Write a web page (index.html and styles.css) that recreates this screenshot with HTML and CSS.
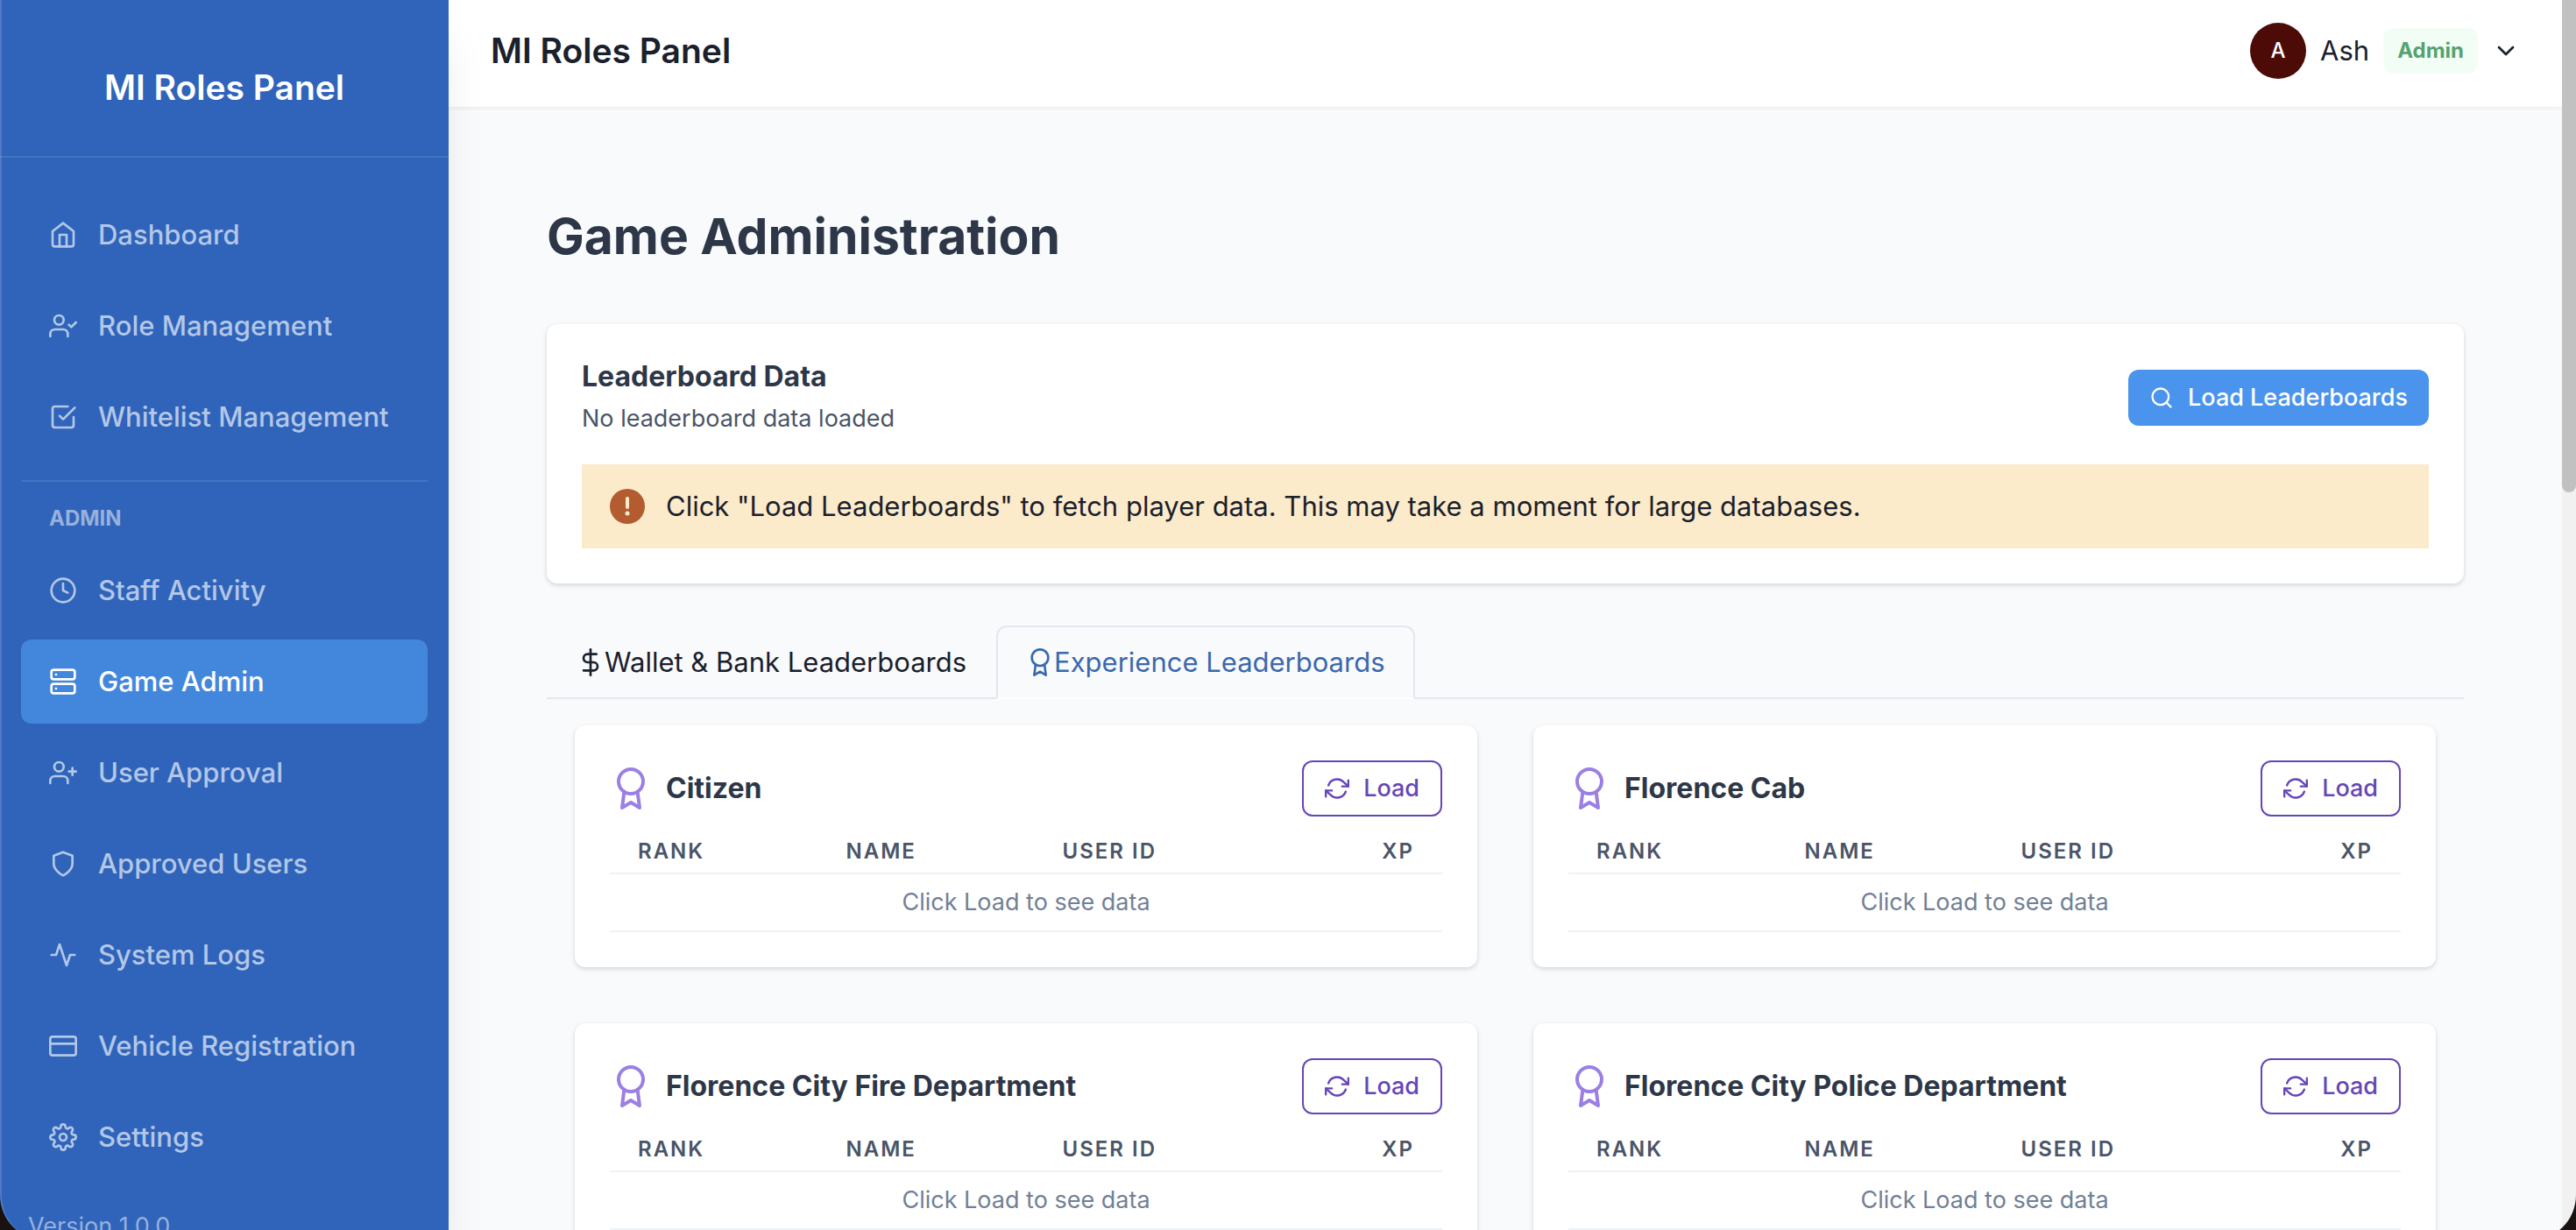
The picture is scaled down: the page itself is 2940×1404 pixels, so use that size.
FILE: index.html
```html
<!DOCTYPE html>
<html lang="en">
<head>
<meta charset="utf-8">
<title>MI Roles Panel</title>
<link rel="stylesheet" href="styles.css">
</head>
<body>
<svg class="sprite" aria-hidden="true">
  <symbol id="home" viewBox="0 0 24 24"><path d="M3 9l9-7 9 7v11a2 2 0 0 1-2 2H5a2 2 0 0 1-2-2z"/><path d="M9 22V12h6v10"/></symbol>
  <symbol id="user-check" viewBox="0 0 24 24"><path d="M16 21v-2a4 4 0 0 0-4-4H5a4 4 0 0 0-4 4v2"/><circle cx="8.500" cy="7" r="4"/><path d="M17 11l2 2 4-4"/></symbol>
  <symbol id="check-square" viewBox="0 0 24 24"><path d="M9 11l3 3L22 4"/><path d="M21 12v7a2 2 0 0 1-2 2H5a2 2 0 0 1-2-2V5a2 2 0 0 1 2-2h11"/></symbol>
  <symbol id="clock" viewBox="0 0 24 24"><circle cx="12" cy="12" r="10"/><path d="M12 6v6l4 2"/></symbol>
  <symbol id="server" viewBox="0 0 24 24"><rect x="2" y="2" width="20" height="8" rx="2"/><rect x="2" y="14" width="20" height="8" rx="2"/><path d="M6 6h.01M6 18h.01"/></symbol>
  <symbol id="user-plus" viewBox="0 0 24 24"><path d="M16 21v-2a4 4 0 0 0-4-4H5a4 4 0 0 0-4 4v2"/><circle cx="8.500" cy="7" r="4"/><path d="M20 8v6M23 11h-6"/></symbol>
  <symbol id="shield" viewBox="0 0 24 24"><path d="M12 22s8-4 8-10V5l-8-3-8 3v7c0 6 8 10 8 10z"/></symbol>
  <symbol id="activity" viewBox="0 0 24 24"><path d="M22 12h-4l-3 9L9 3l-3 9H2"/></symbol>
  <symbol id="card" viewBox="0 0 24 24"><rect x="1" y="4" width="22" height="16" rx="2"/><path d="M1 10h22"/></symbol>
  <symbol id="settings" viewBox="0 0 24 24"><circle cx="12" cy="12" r="3"/><path d="M19.4 15a1.65 1.65 0 0 0 .33 1.82l.06.06a2 2 0 0 1 0 2.83 2 2 0 0 1-2.83 0l-.06-.06a1.65 1.65 0 0 0-1.82-.33 1.65 1.65 0 0 0-1 1.51V21a2 2 0 0 1-2 2 2 2 0 0 1-2-2v-.09A1.65 1.65 0 0 0 9 19.4a1.65 1.65 0 0 0-1.82.33l-.06.06a2 2 0 0 1-2.83 0 2 2 0 0 1 0-2.83l.06-.06a1.65 1.65 0 0 0 .33-1.82 1.65 1.65 0 0 0-1.51-1H3a2 2 0 0 1-2-2 2 2 0 0 1 2-2h.09A1.65 1.65 0 0 0 4.6 9a1.65 1.65 0 0 0-.33-1.82l-.06-.06a2 2 0 0 1 0-2.83 2 2 0 0 1 2.83 0l.06.06a1.65 1.65 0 0 0 1.82.33H9a1.65 1.65 0 0 0 1-1.51V3a2 2 0 0 1 2-2 2 2 0 0 1 2 2v.09a1.65 1.65 0 0 0 1 1.51 1.65 1.65 0 0 0 1.82-.33l.06-.06a2 2 0 0 1 2.83 0 2 2 0 0 1 0 2.83l-.06.06a1.65 1.65 0 0 0-.33 1.82V9a1.65 1.65 0 0 0 1.51 1H21a2 2 0 0 1 2 2 2 2 0 0 1-2 2h-.09a1.65 1.65 0 0 0-1.51 1z"/></symbol>
  <symbol id="chevron-down" viewBox="0 0 24 24"><path d="M6 9l6 6 6-6"/></symbol>
  <symbol id="search" viewBox="0 0 24 24"><circle cx="11" cy="11" r="8"/><path d="M21 21l-4.350-4.350"/></symbol>
  <symbol id="dollar" viewBox="0 0 24 24"><path d="M12 1v22"/><path d="M17 5H9.500a3.500 3.500 0 0 0 0 7h5a3.500 3.500 0 0 1 0 7H6"/></symbol>
  <symbol id="award" viewBox="0 0 24 24"><circle cx="12" cy="8" r="7"/><path d="M8.210 13.890L7 23l5-3 5 3-1.210-9.120"/></symbol>
  <symbol id="refresh" viewBox="0 0 24 24"><path d="M23 4v6h-6M1 20v-6h6"/><path d="M3.510 9a9 9 0 0 1 14.850-3.360L23 10M1 14l4.640 4.360A9 9 0 0 0 20.490 15"/></symbol>
</svg>

<div class="app">
  <aside class="sidebar">
    <div class="brand">MI Roles Panel</div>
    <nav class="nav">
      <a class="nav-item" href="#"><svg class="icon"><use href="#home"/></svg>Dashboard</a>
      <a class="nav-item" href="#"><svg class="icon"><use href="#user-check"/></svg>Role Management</a>
      <a class="nav-item" href="#"><svg class="icon"><use href="#check-square"/></svg>Whitelist Management</a>
      <div class="nav-label">ADMIN</div>
      <a class="nav-item" href="#"><svg class="icon"><use href="#clock"/></svg>Staff Activity</a>
      <a class="nav-item active" href="#" aria-current="page"><svg class="icon"><use href="#server"/></svg>Game Admin</a>
      <a class="nav-item" href="#"><svg class="icon"><use href="#user-plus"/></svg>User Approval</a>
      <a class="nav-item" href="#"><svg class="icon"><use href="#shield"/></svg>Approved Users</a>
      <a class="nav-item" href="#"><svg class="icon"><use href="#activity"/></svg>System Logs</a>
      <a class="nav-item" href="#"><svg class="icon"><use href="#card"/></svg>Vehicle Registration</a>
      <a class="nav-item" href="#"><svg class="icon"><use href="#settings"/></svg>Settings</a>
    </nav>
    <div class="version">Version 1.0.0</div>
  </aside>

  <div class="page">
    <header class="topbar">
      <div class="topbar-title">MI Roles Panel</div>
      <button class="user-menu" type="button">
        <span class="avatar">A</span>
        <span>Ash</span>
        <span class="badge">Admin</span>
        <svg class="icon"><use href="#chevron-down"/></svg>
      </button>
    </header>

    <main class="content">
      <h1>Game Administration</h1>

      <section class="card summary">
        <div class="summary-row">
          <div>
            <h2>Leaderboard Data</h2>
            <p class="status">No leaderboard data loaded</p>
          </div>
          <button class="btn btn-primary" type="button"><svg class="icon"><use href="#search"/></svg>Load Leaderboards</button>
        </div>
        <div class="alert" role="alert">
          <svg class="alert-icon" viewBox="0 0 40 40"><circle class="alert-disc" cx="20" cy="20" r="20"/><path class="alert-mark" d="M20 11v10"/><circle class="alert-dot" cx="20" cy="28" r="2.500"/></svg>
          Click "Load Leaderboards" to fetch player data. This may take a moment for large databases.
        </div>
      </section>

      <div class="tabs" role="tablist">
        <button class="tab" type="button" role="tab" aria-selected="false"><svg class="icon"><use href="#dollar"/></svg>Wallet &amp; Bank Leaderboards</button>
        <button class="tab active" type="button" role="tab" aria-selected="true"><svg class="icon"><use href="#award"/></svg>Experience Leaderboards</button>
      </div>

      <div class="boards" role="tabpanel">
        <section class="card">
          <div class="board-head">
            <svg class="icon board-icon"><use href="#award"/></svg>
            <h2>Citizen</h2>
            <button class="btn btn-outline" type="button"><svg class="icon"><use href="#refresh"/></svg>Load</button>
          </div>
          <table>
            <colgroup><col class="col-rank"><col class="col-name"><col><col></colgroup>
            <thead><tr><th>RANK</th><th>NAME</th><th>USER ID</th><th class="num">XP</th></tr></thead>
            <tbody><tr><td colspan="4">Click Load to see data</td></tr></tbody>
          </table>
        </section>
        <section class="card">
          <div class="board-head">
            <svg class="icon board-icon"><use href="#award"/></svg>
            <h2>Florence Cab</h2>
            <button class="btn btn-outline" type="button"><svg class="icon"><use href="#refresh"/></svg>Load</button>
          </div>
          <table>
            <colgroup><col class="col-rank"><col class="col-name"><col><col></colgroup>
            <thead><tr><th>RANK</th><th>NAME</th><th>USER ID</th><th class="num">XP</th></tr></thead>
            <tbody><tr><td colspan="4">Click Load to see data</td></tr></tbody>
          </table>
        </section>
        <section class="card">
          <div class="board-head">
            <svg class="icon board-icon"><use href="#award"/></svg>
            <h2>Florence City Fire Department</h2>
            <button class="btn btn-outline" type="button"><svg class="icon"><use href="#refresh"/></svg>Load</button>
          </div>
          <table>
            <colgroup><col class="col-rank"><col class="col-name"><col><col></colgroup>
            <thead><tr><th>RANK</th><th>NAME</th><th>USER ID</th><th class="num">XP</th></tr></thead>
            <tbody><tr><td colspan="4">Click Load to see data</td></tr></tbody>
          </table>
        </section>
        <section class="card">
          <div class="board-head">
            <svg class="icon board-icon"><use href="#award"/></svg>
            <h2>Florence City Police Department</h2>
            <button class="btn btn-outline" type="button"><svg class="icon"><use href="#refresh"/></svg>Load</button>
          </div>
          <table>
            <colgroup><col class="col-rank"><col class="col-name"><col><col></colgroup>
            <thead><tr><th>RANK</th><th>NAME</th><th>USER ID</th><th class="num">XP</th></tr></thead>
            <tbody><tr><td colspan="4">Click Load to see data</td></tr></tbody>
          </table>
        </section>
      </div>
    </main>
  </div>

  <div class="scroll-track" aria-hidden="true"><div class="scroll-thumb"></div></div>
</div>
<div class="window-frame" aria-hidden="true"></div>
</body>
</html>
```
FILE: styles.css
```css
* {
  box-sizing: border-box;
}

html,
body {
  height: 100%;
  margin: 0;
  overflow: hidden;
}

body {
  background: #f9fafc;
  color: #1a202c;
  font: 400 31px/48px Inter, "Liberation Sans", sans-serif;
}

h1,
h2,
p {
  margin: 0;
}

button {
  border: 0;
  background: none;
  color: inherit;
  font: inherit;
  cursor: pointer;
}

.sprite {
  display: none;
}

.icon {
  width: 32px;
  height: 32px;
  flex: none;
  fill: none;
  stroke: currentColor;
  stroke-width: 2;
  stroke-linecap: round;
  stroke-linejoin: round;
}

.app {
  display: grid;
  grid-template-columns: 512px 1fr 16px;
  grid-template-rows: 100vh;
}

/* Sidebar */

.sidebar {
  position: relative;
  z-index: 1;
  background: #2f64ba;
  color: #fff;
  box-shadow: 0 40px 50px -10px rgba(0, 0, 0, 0.1), 0 20px 20px -10px rgba(0, 0, 0, 0.04);
}

.brand {
  padding: 76px 24px 54px;
  border-bottom: 2px solid rgba(255, 255, 255, 0.1);
  font-size: 39px;
  font-weight: 600;
  text-align: center;
}

.nav {
  display: flex;
  flex-direction: column;
  gap: 8px;
  padding: 40px 24px 24px;
}

.nav-item {
  display: flex;
  align-items: center;
  gap: 24px;
  height: 96px;
  padding: 0 32px;
  border-radius: 12px;
  color: #b4c7e7;
  font-weight: 500;
  text-decoration: none;
}

.nav-item.active {
  background: #4387dd;
  color: #fff;
}

.nav-label {
  margin-top: 16px;
  padding: 24px 32px 8px;
  border-top: 2px solid rgba(255, 255, 255, 0.1);
  color: #97b1dc;
  font-size: 24px;
  font-weight: 700;
  line-height: 36px;
}

.version {
  padding: 10px 32px;
  color: #97b1dc;
  font-size: 27px;
  line-height: 40px;
}

/* Top bar */

.page {
  min-width: 0;
  overflow: hidden;
}

.topbar {
  display: flex;
  align-items: center;
  justify-content: space-between;
  padding: 26px 48px 32px;
  background: #fff;
  box-shadow: 0 2px 4px rgba(0, 0, 0, 0.06);
}

.topbar-title {
  font-size: 39px;
  font-weight: 600;
}

.user-menu {
  display: flex;
  align-items: center;
  gap: 16px;
  padding: 0;
}

.avatar {
  width: 64px;
  height: 64px;
  border-radius: 50%;
  background: #4c0b07;
  color: #fff;
  font-size: 24px;
  font-weight: 500;
  line-height: 64px;
}

.badge {
  padding: 8px 16px;
  border-radius: 12px;
  background: #f2fef5;
  color: #58a171;
  font-size: 24px;
  font-weight: 700;
  line-height: 36px;
}

/* Content */

.content {
  padding: 112px;
}

h1 {
  margin-bottom: 64px;
  color: #2d3748;
  font-size: 57px;
  font-weight: 700;
  line-height: 72px;
}

h2 {
  color: #2d3748;
  font-size: 32px;
  font-weight: 700;
  line-height: 40px;
}

.card {
  padding: 40px;
  border-radius: 12px;
  background: #fff;
  box-shadow: 0 2px 6px rgba(0, 0, 0, 0.1), 0 2px 4px rgba(0, 0, 0, 0.06);
}

.summary {
  margin-bottom: 48px;
}

.summary-row {
  display: flex;
  align-items: center;
  justify-content: space-between;
  margin-bottom: 32px;
}

.status {
  margin-top: 8px;
  color: #4a5568;
  font-size: 27px;
  line-height: 40px;
}

.btn {
  display: flex;
  align-items: center;
  gap: 16px;
  height: 64px;
  padding: 0 24px;
  border-radius: 12px;
  font-size: 27px;
  font-weight: 500;
}

.btn .icon {
  width: 28px;
  height: 28px;
}

.btn-primary {
  background: #4a94ed;
  color: #fff;
}

.btn-outline {
  border: 2px solid #6645b8;
  color: #6645b8;
}

.alert {
  display: flex;
  align-items: center;
  gap: 24px;
  padding: 24px 32px;
  background: #fbebcb;
}

.alert-icon {
  width: 40px;
  height: 40px;
  flex: none;
}

.alert-disc {
  fill: #b35c2f;
}

.alert-mark {
  stroke: #fbebcb;
  stroke-width: 4;
  stroke-linecap: round;
}

.alert-dot {
  fill: #fbebcb;
}

.tabs {
  display: flex;
  box-shadow: inset 0 -2px #e2e8f0;
}

.tab {
  display: flex;
  align-items: center;
  padding: 16px 32px;
  border: 2px solid transparent;
  border-radius: 12px 12px 0 0;
}

.tab.active {
  border-color: #e2e8f0;
  border-bottom-color: #fff;
  background: #f9fafc;
  color: #3a69ae;
}

.boards {
  display: grid;
  grid-template-columns: 1fr 1fr;
  gap: 64px;
  padding: 30px 32px;
}

.board-head {
  display: flex;
  align-items: center;
  gap: 16px;
  margin-bottom: 16px;
}

.board-head h2 {
  flex: 1;
}

.board-icon {
  width: 48px;
  height: 48px;
  color: #9b7fe4;
}

table {
  width: 100%;
  border-collapse: collapse;
  table-layout: fixed;
}

.col-rank {
  width: 25%;
}

.col-name {
  width: 26%;
}

th {
  padding: 8px 32px;
  border-bottom: 2px solid #edf2f7;
  color: #4a5568;
  font-size: 24px;
  font-weight: 600;
  letter-spacing: 2px;
  line-height: 32px;
  text-align: left;
}

th.num {
  text-align: right;
}

td {
  padding: 12px 32px;
  border-bottom: 2px solid #edf2f7;
  color: #718096;
  font-size: 27px;
  line-height: 40px;
  text-align: center;
}

/* Scrollbar and rounded window edge */

.scroll-track {
  background: #f1f1f1;
}

.scroll-thumb {
  height: 40%;
  border-radius: 0 0 8px 8px;
  background: #c1c1c1;
}

.window-frame {
  position: fixed;
  z-index: 2;
  inset: -80px 0 -12px;
  border-left: 2px solid rgba(255, 255, 255, 0.15);
  border-radius: 52px;
  box-shadow: 0 0 0 40px #1a1210;
  pointer-events: none;
}
```
